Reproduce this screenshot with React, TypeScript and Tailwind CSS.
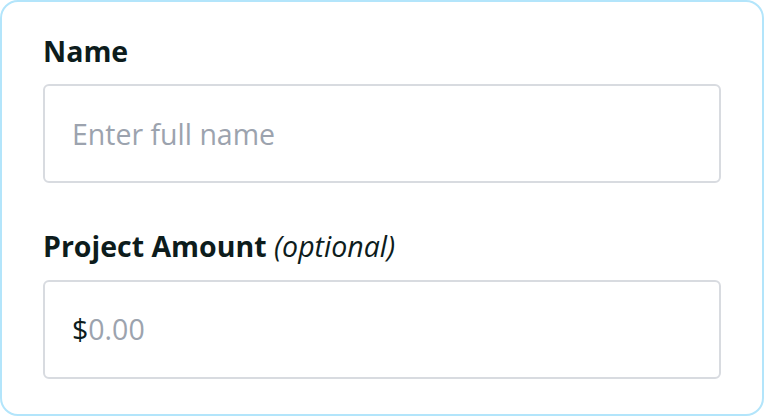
export default function App() {
  return (
    <div
      className="w-[764px] h-[416px] bg-white"
      style={{ fontFamily: '"Open Sans", sans-serif' }}
    >
      <form className="h-full rounded-[18px] border-2 border-[#b3e5fb] px-[41px] pt-[30px] flex flex-col">
        <label className="block text-[28.5px] leading-[38px] font-bold text-[#0d1c1c]">Name</label>
        <input
          type="text"
          placeholder="Enter full name"
          className="mt-[14px] h-[99px] w-full rounded-[6px] border-2 border-[#d8dbe0] px-[27px] text-[28.5px] text-[#0d1c1c] placeholder:text-[#9ca3ae] outline-none"
        />

        <label className="mt-[44px] block text-[28.5px] leading-[38px] font-bold text-[#0d1c1c]">
          Project Amount <span className="font-normal italic">(optional)</span>
        </label>
        <div className="mt-[15px] h-[99px] w-full rounded-[6px] border-2 border-[#d8dbe0] px-[27px] flex items-center text-[28.5px]">
          <span className="text-[#0d1c1c]">$</span>
          <input
            type="text"
            placeholder="0.00"
            className="flex-1 text-[#0d1c1c] placeholder:text-[#9ca3ae] outline-none"
          />
        </div>
      </form>
    </div>
  );
}
